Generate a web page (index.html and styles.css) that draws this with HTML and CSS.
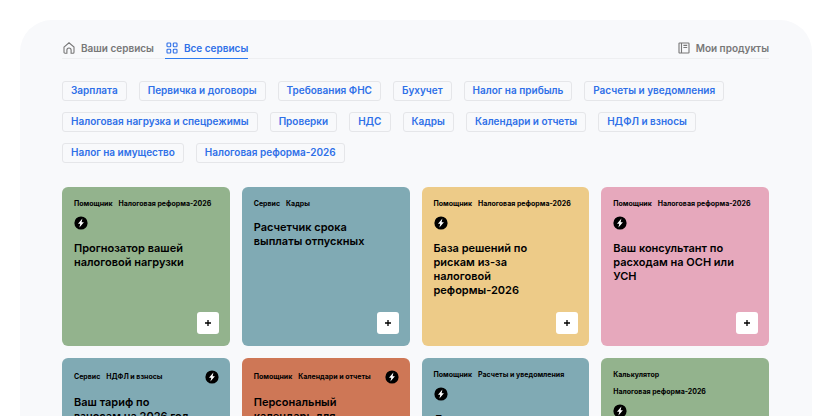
FILE: index.html
```html
<!DOCTYPE html>
<html lang="ru">
<head>
  <meta charset="UTF-8">
  <title>Все сервисы</title>
  <meta name="viewport" content="width=device-width, initial-scale=1.0">
  <link rel="stylesheet" href="styles.css">
</head>
<body>
  <svg class="sprite" aria-hidden="true">
    <symbol id="bolt" viewBox="0 0 14 14">
      <circle cx="7" cy="7" r="6.6" fill="#000"/>
      <path d="M8.4 2.6 4 7.7h2.3l-.9 3.7 4.5-5.2H7.6z" fill="#fff"/>
    </symbol>
    <symbol id="plus" viewBox="0 0 8 8">
      <path d="M4 1v6M1 4h6" stroke="#000" stroke-width="1.3" fill="none"/>
    </symbol>
  </svg>

  <main class="panel">
    <nav class="tabs">
      <a class="tab" href="#my">
        <svg class="tab-icon" viewBox="0 0 12 12"><path d="M1 5.1 6 .8l5 4.3v5.1a1 1 0 0 1-1 1H8.1V8.1a2.1 2.1 0 0 0-4.2 0v3.1H2a1 1 0 0 1-1-1z"/></svg>
        Ваши сервисы
      </a>
      <a class="tab active" href="#all">
        <svg class="tab-icon" viewBox="0 0 12 12"><rect x="1" y="1" width="3.7" height="3.7" rx=".8"/><rect x="7.3" y="1" width="3.7" height="3.7" rx=".8"/><rect x="1" y="7.3" width="3.7" height="3.7" rx=".8"/><rect x="7.3" y="7.3" width="3.7" height="3.7" rx=".8"/></svg>
        Все сервисы
      </a>
      <a class="tab tab-right" href="#products">
        <svg class="tab-icon" viewBox="0 0 12 12"><rect x="1" y="1" width="10" height="10" rx=".6"/><path d="M3.5 1v10M5.4 3.4h3.8M5.4 5.5h3.8"/></svg>
        Мои продукты
      </a>
    </nav>

    <div class="filters">
      <button class="filter">Зарплата</button>
      <button class="filter">Первичка и договоры</button>
      <button class="filter">Требования ФНС</button>
      <button class="filter">Бухучет</button>
      <button class="filter">Налог на прибыль</button>
      <button class="filter">Расчеты и уведомления</button>
      <button class="filter">Налоговая нагрузка и спецрежимы</button>
      <button class="filter">Проверки</button>
      <button class="filter">НДС</button>
      <button class="filter">Кадры</button>
      <button class="filter">Календари и отчеты</button>
      <button class="filter">НДФЛ и взносы</button>
      <button class="filter">Налог на имущество</button>
      <button class="filter">Налоговая реформа-2026</button>
    </div>

    <div class="cards">
      <article class="card green">
        <div class="card-head">
          <div class="tags"><span>Помощник</span><span>Налоговая реформа-2026</span></div>
          <svg class="bolt"><use href="#bolt"/></svg>
        </div>
        <h3 class="card-title">Прогнозатор вашей налоговой нагрузки</h3>
        <button class="add" aria-label="Добавить"><svg><use href="#plus"/></svg></button>
      </article>
      <article class="card teal">
        <div class="card-head">
          <div class="tags"><span>Сервис</span><span>Кадры</span></div>
        </div>
        <h3 class="card-title">Расчетчик срока выплаты отпускных</h3>
        <button class="add" aria-label="Добавить"><svg><use href="#plus"/></svg></button>
      </article>
      <article class="card yellow">
        <div class="card-head">
          <div class="tags"><span>Помощник</span><span>Налоговая реформа-2026</span></div>
          <svg class="bolt"><use href="#bolt"/></svg>
        </div>
        <h3 class="card-title">База решений по рискам из-за налоговой реформы-2026</h3>
        <button class="add" aria-label="Добавить"><svg><use href="#plus"/></svg></button>
      </article>
      <article class="card pink">
        <div class="card-head">
          <div class="tags"><span>Помощник</span><span>Налоговая реформа-2026</span></div>
          <svg class="bolt"><use href="#bolt"/></svg>
        </div>
        <h3 class="card-title">Ваш консультант по расходам на ОСН или УСН</h3>
        <button class="add" aria-label="Добавить"><svg><use href="#plus"/></svg></button>
      </article>
      <article class="card teal">
        <div class="card-head">
          <div class="tags"><span>Сервис</span><span>НДФЛ и взносы</span></div>
          <svg class="bolt"><use href="#bolt"/></svg>
        </div>
        <h3 class="card-title">Ваш тариф по взносам на 2026 год</h3>
      </article>
      <article class="card orange">
        <div class="card-head">
          <div class="tags"><span>Помощник</span><span>Календари и отчеты</span></div>
          <svg class="bolt"><use href="#bolt"/></svg>
        </div>
        <h3 class="card-title">Персональный календарь для</h3>
      </article>
      <article class="card teal">
        <div class="card-head">
          <div class="tags"><span>Помощник</span><span>Расчеты и уведомления</span></div>
          <svg class="bolt"><use href="#bolt"/></svg>
        </div>
        <h3 class="card-title">Д</h3>
      </article>
      <article class="card green">
        <div class="card-head">
          <div class="tags"><span>Калькулятор</span><span>Налоговая реформа-2026</span></div>
          <svg class="bolt"><use href="#bolt"/></svg>
        </div>
      </article>
    </div>
  </main>
</body>
</html>
```

FILE: styles.css
```css
* { box-sizing:border-box; }
body {
  margin:0; padding:20px 20px 0; height:100vh; overflow:hidden;
  background:#fff; font-family:Inter, "Noto Sans", sans-serif; color:#000;
}
button { font-family:inherit; cursor:pointer; }
.sprite { position:absolute; width:0; height:0; }
.panel {
  background:#f8f9fb; border-radius:32px 32px 0 0;
  padding:17px 43px 24px 42px;
}

.tabs {
  display:flex; gap:11px; border-bottom:1px solid #eeeff1;
}
.tab {
  display:flex; align-items:center; gap:6px; height:22px;
  padding-left:1px; margin-bottom:-1px;
  border-bottom:1px solid transparent;
  font-size:10px; font-weight:600; color:#777; text-decoration:none;
}
.tab.active { color:#2f70e8; border-color:#2f7cf0; }
.tab-right { margin-left:auto; }
.tab-icon {
  width:12px; height:12px; fill:none; stroke:currentColor; stroke-width:1.1;
}

.filters {
  display:flex; flex-wrap:wrap; gap:11px 12px; margin:22px 0 24px;
}
.filter {
  height:20px; padding:0 8px 2px; border:1px solid #e5e6e9; border-radius:3px;
  background:transparent; color:#2f70e8;
  font-size:10px; font-weight:600; line-height:16px;
}

.cards {
  display:grid; grid-template-columns:repeat(4, 1fr); gap:12px;
}
.card {
  display:flex; flex-direction:column; min-height:159px;
  padding:12px 11px 12px 12px; border-radius:6px;
}
.green { background:#93b38d; }
.teal { background:#80aab4; }
.yellow { background:#edcb88; }
.pink { background:#e6a8bc; }
.orange { background:#ce7756; }
.card-head {
  display:flex; flex-wrap:wrap; align-items:center;
  justify-content:space-between; gap:7px;
}
.tags {
  display:flex; flex-wrap:wrap; gap:7px 6px; max-width:142px;
  font-size:7px; font-weight:700; line-height:10px;
}
.bolt { width:14px; height:14px; }
.card-title {
  margin:11px 0 0; max-width:123px;
  font-size:11px; font-weight:600; line-height:14px;
}
.add {
  display:flex; align-items:center; justify-content:center;
  width:22px; height:22px; margin:auto 0 0 auto; padding:0;
  border:none; border-radius:3px; background:#fff;
}
.add svg { width:8px; height:8px; }
```
